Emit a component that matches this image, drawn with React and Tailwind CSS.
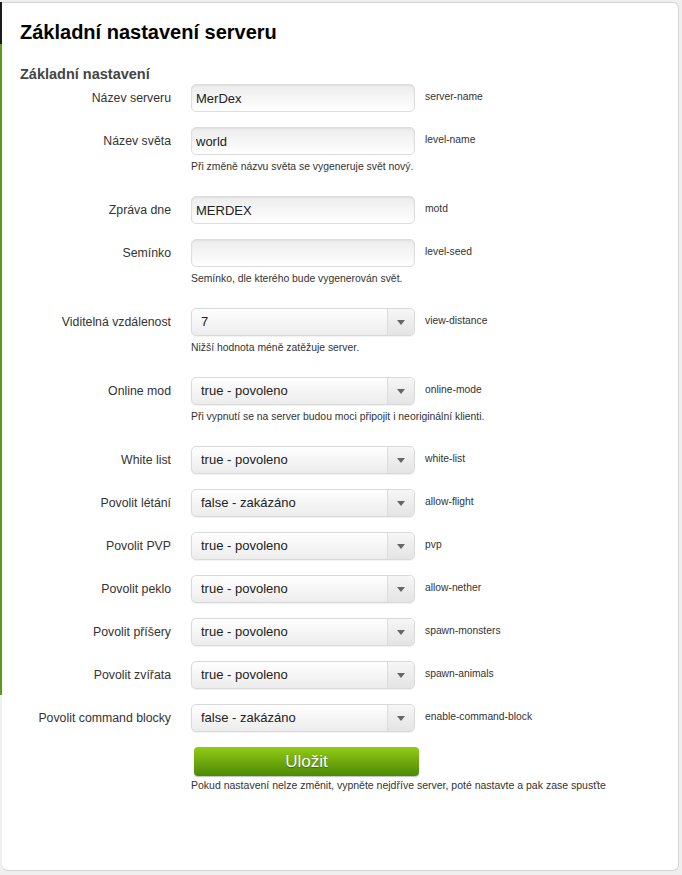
import React from "react";

const rows = [
  { label: "Název serveru", value: "MerDex", key: "server-name" },
  { label: "Název světa", value: "world", key: "level-name", help: "Při změně názvu světa se vygeneruje svět nový." },
  { label: "Zpráva dne", value: "MERDEX", key: "motd" },
  { label: "Semínko", value: "", key: "level-seed", help: "Semínko, dle kterého bude vygenerován svět." },
  { label: "Viditelná vzdálenost", value: "7", key: "view-distance", select: true, help: "Nižší hodnota méně zatěžuje server." },
  { label: "Online mod", value: "true - povoleno", key: "online-mode", select: true, help: "Při vypnutí se na server budou moci připojit i neoriginální klienti." },
  { label: "White list", value: "true - povoleno", key: "white-list", select: true },
  { label: "Povolit létání", value: "false - zakázáno", key: "allow-flight", select: true },
  { label: "Povolit PVP", value: "true - povoleno", key: "pvp", select: true },
  { label: "Povolit peklo", value: "true - povoleno", key: "allow-nether", select: true },
  { label: "Povolit příšery", value: "true - povoleno", key: "spawn-monsters", select: true },
  { label: "Povolit zvířata", value: "true - povoleno", key: "spawn-animals", select: true },
  { label: "Povolit command blocky", value: "false - zakázáno", key: "enable-command-block", select: true },
];

function Field({ row }) {
  if (row.select) {
    return (
      <div className="flex h-[28px] w-[224px] items-stretch rounded-[5px] border border-[#d9d9d9] bg-gradient-to-b from-white to-[#ececec] shadow-[0_1px_1px_rgba(0,0,0,0.06)]">
        <div className="flex flex-1 items-center pl-[9px] text-[13px] text-[#222]">{row.value}</div>
        <div className="flex w-[27px] items-center justify-center rounded-r-[5px] border-l border-[#dcdcdc] bg-gradient-to-b from-[#f6f6f6] to-[#e4e4e4]">
          <svg width="8" height="5" viewBox="0 0 8 5">
            <path d="M0 0 L8 0 L4 5 Z" fill="#666" />
          </svg>
        </div>
      </div>
    );
  }
  return (
    <input
      type="text"
      defaultValue={row.value}
      className="h-[28px] w-[224px] rounded-[5px] border border-[#dcdcdc] bg-gradient-to-b from-[#ececec] to-white px-[4px] text-[13px] text-[#222] shadow-[inset_0_1px_2px_rgba(0,0,0,0.06)] outline-none"
    />
  );
}

function App() {
  return (
    <div className="flex h-[875px] w-[682px] bg-[#efefef] font-['Liberation_Sans',Arial,sans-serif] text-[#333]">
      <div className="flex w-[2px] flex-col pt-[2px]">
        <div className="h-[42px] bg-[#1a1a1a]" />
        <div className="h-[651px] bg-[#5a9a1f]" />
      </div>
      <div className="mt-[2px] mb-[4px] mr-[3px] flex-1 rounded-b-[6px] rounded-tr-[6px] border border-l-0 border-[#d4d4d4] bg-white pt-[17px]">
        <h1 className="ml-[18px] text-[20px] font-bold leading-[24px] text-black">Základní nastavení serveru</h1>
        <h2 className="ml-[18px] mt-[21px] mb-[1px] text-[14.5px] font-bold leading-[18px] text-[#444]">Základní nastavení</h2>

        <div>
          {rows.map((row) => (
            <div key={row.key} className="mb-[15px] flex">
              <div className="flex h-[28px] w-[169px] items-center justify-end text-[12.3px]">{row.label}</div>
              <div className="ml-[20px] flex w-[224px] flex-col">
                <Field row={row} />
                {row.help && (
                  <p className="mt-[5px] mb-[7px] whitespace-nowrap text-[10.4px] leading-[14px] text-[#333]">{row.help}</p>
                )}
              </div>
              <div className="ml-[10px] flex h-[28px] items-center pb-[2px] text-[10.3px] text-[#333]">{row.key}</div>
            </div>
          ))}
        </div>

        <div className="ml-[189px] mt-[1px]">
          <button className="ml-[3px] h-[29px] w-[225px] rounded-[4px] bg-gradient-to-b from-[#93cc14] to-[#4b8a06] text-[17px] leading-[29px] text-white shadow-[0_1px_1px_rgba(0,0,0,0.25)] [text-shadow:0_1px_1px_rgba(0,0,0,0.35)]">
            Uložit
          </button>
          <p className="mt-[2px] whitespace-nowrap text-[10.5px] leading-[14px] text-[#333]">
            Pokud nastavení nelze změnit, vypněte nejdříve server, poté nastavte a pak zase spusťte
          </p>
        </div>
      </div>
    </div>
  );
}

export default App;
